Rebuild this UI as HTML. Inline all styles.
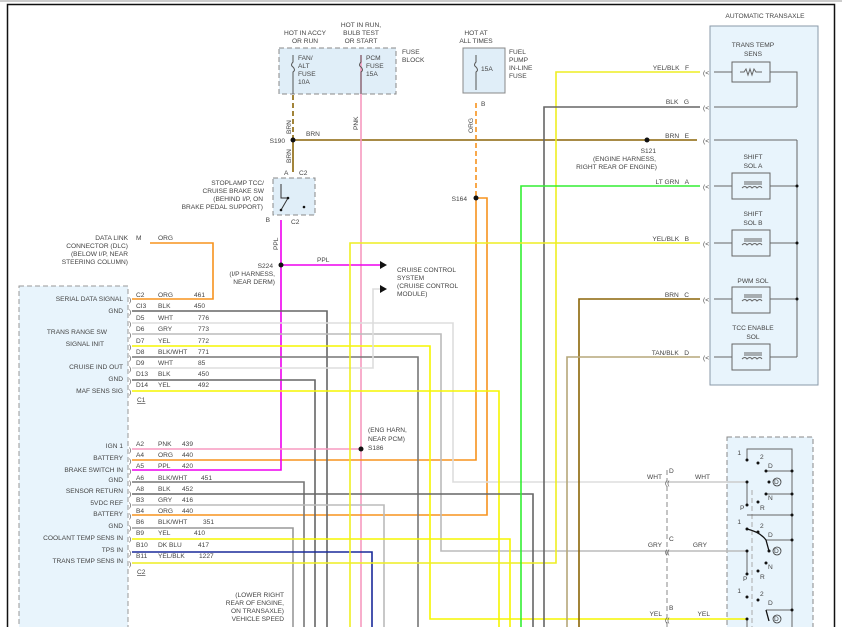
<!DOCTYPE html>
<html><head><meta charset="utf-8"><style>
html,body{margin:0;padding:0;background:#fff;width:842px;height:627px;overflow:hidden}
svg{display:block}
text{font-family:"Liberation Sans",Arial,sans-serif;font-size:6.6px;fill:#444}
</style></head><body>
<svg width="842" height="627" viewBox="0 0 842 627" xmlns="http://www.w3.org/2000/svg">
<rect x="0" y="0" width="842" height="627" fill="#fff"/>
<rect x="0" y="0" width="842" height="2" fill="#ccc"/>
<rect x="7.5" y="4.5" width="827" height="640" fill="none" stroke="#111" stroke-width="1.5"/>

<!-- boxes -->
<rect x="19" y="286" width="109" height="360" fill="#e8f4fc" stroke="#999" stroke-dasharray="5,3"/>
<rect x="279" y="48" width="117" height="46" fill="#e0eef8" stroke="#888" stroke-dasharray="5,3"/>
<rect x="463" y="48" width="42" height="45" fill="#e0eef8" stroke="#888"/>
<rect x="273" y="178" width="42" height="37" fill="#e0eef8" stroke="#888" stroke-dasharray="5,3"/>
<rect x="710" y="26" width="108" height="359" fill="#e8f4fc" stroke="#8a9aa8"/>
<rect x="727" y="437" width="86" height="200" fill="#e8f4fc" stroke="#888" stroke-dasharray="5,3"/>
<line x1="752" y1="490" x2="752" y2="627" stroke="#aaa" stroke-dasharray="5,3"/>
<line x1="667" y1="470" x2="667" y2="627" stroke="#888" stroke-dasharray="5,3"/>

<g fill="none" stroke-width="1.6">
<!-- fuse verticals -->
<line x1="293" y1="95" x2="293" y2="140" stroke="#8b6508" stroke-dasharray="5,3"/>
<line x1="293" y1="140" x2="293" y2="172" stroke="#8b6508"/>
<line x1="293" y1="140" x2="697" y2="140" stroke="#8b6508"/>
<line x1="361" y1="55" x2="361" y2="627" stroke="#f79ac0"/>
<line x1="476" y1="103" x2="476" y2="198" stroke="#f7931e" stroke-dasharray="5,3"/>
<polyline points="476,198 476,460 132,460" stroke="#f7931e"/>
<polyline points="476,198 487,198 487,515 132,515" stroke="#f7931e"/>
<!-- DLC -->
<polyline points="150,243 213,243 213,299 132,299" stroke="#f7931e"/>
<!-- PPL -->
<polyline points="281,220 281,470 132,470" stroke="#ee00ee"/>
<line x1="281" y1="265" x2="380" y2="265" stroke="#ee00ee"/>
<!-- PCM wires -->
<polyline points="132,311 327,311 327,627" stroke="#666"/>
<polyline points="132,323 453,323 453,482 700,482" stroke="#ddd"/>
<line x1="667" y1="482" x2="747" y2="482" stroke="#ccc"/>
<polyline points="132,334 441,334 441,551 747,551" stroke="#bbb"/>
<polyline points="132,346 430,346 430,619 747,619" stroke="#f5f500"/>
<polyline points="132,357 418,357 418,627" stroke="#777"/>
<polyline points="132,368 373,368 373,289 380,289" stroke="#ddd"/>
<polyline points="132,380 315,380 315,627" stroke="#666"/>
<polyline points="132,391 499,391 499,627" stroke="#f5f500"/>
<line x1="132" y1="449" x2="361" y2="449" stroke="#f79ac0"/>
<polyline points="132,482 304,482 304,627" stroke="#777"/>
<polyline points="132,494 533,494 533,627" stroke="#666"/>
<polyline points="132,505 384,505 384,627" stroke="#bbb"/>
<polyline points="132,528 293,528 293,627" stroke="#999"/>
<polyline points="132,539 510,539 510,627" stroke="#f5f500"/>
<polyline points="132,552 372,552 372,627" stroke="#1a2a9a"/>
<polyline points="132,563 556,563 556,72 700,72" stroke="#eeee22"/>
<!-- right side -->
<polyline points="700,107 544,107 544,627" stroke="#666"/>
<polyline points="700,186 521,186 521,627" stroke="#33ee33"/>
<polyline points="700,243 350,243 350,627" stroke="#eeee22"/>
<polyline points="700,299 579,299 579,627" stroke="#8b6508"/>
<polyline points="700,357 567,357 567,627" stroke="#b5a77a"/>
</g>

<!-- transaxle internals -->
<g fill="none" stroke="#666" stroke-width="1">
<line x1="714" y1="72" x2="732" y2="72"/><line x1="714" y1="107" x2="797" y2="107"/>
<line x1="714" y1="140" x2="797" y2="140"/>
<polyline points="770,72 797,72 797,107"/>
<line x1="797" y1="140" x2="797" y2="357"/>
<line x1="714" y1="186" x2="732" y2="186"/><line x1="770" y1="186" x2="797" y2="186"/>
<line x1="714" y1="243" x2="732" y2="243"/><line x1="770" y1="243" x2="797" y2="243"/>
<line x1="714" y1="299" x2="732" y2="299"/><line x1="770" y1="299" x2="797" y2="299"/>
<line x1="714" y1="357" x2="732" y2="357"/><line x1="770" y1="357" x2="797" y2="357"/>
<rect x="732" y="62" width="38" height="20" fill="#e8f4fc"/>
<rect x="732" y="173" width="38" height="26" fill="#e8f4fc"/>
<rect x="732" y="230" width="38" height="26" fill="#e8f4fc"/>
<rect x="732" y="287" width="38" height="26" fill="#e8f4fc"/>
<rect x="732" y="344" width="38" height="26" fill="#e8f4fc"/>
<path d="M740 72 l4 0 l2 -3 l2 6 l2 -6 l2 6 l2 -6 l2 3 l6 0"/>
<path d="M742 188 q3 -3 5 0 q3 -3 5 0 q3 -3 5 0 q3 -3 5 0 M744 182 h18 M744 184 h18"/>
<path d="M742 245 q3 -3 5 0 q3 -3 5 0 q3 -3 5 0 q3 -3 5 0 M744 239 h18 M744 241 h18"/>
<path d="M742 301 q3 -3 5 0 q3 -3 5 0 q3 -3 5 0 q3 -3 5 0 M744 295 h18 M744 297 h18"/>
<path d="M742 359 q3 -3 5 0 q3 -3 5 0 q3 -3 5 0 q3 -3 5 0 M744 353 h18 M744 355 h18"/>
<!-- PRNDL -->
<path d="M747 460 V449 H792 V627 M766 471 H792 M766 494 H792 M747 515 H792 M747 482 V505 M766 540 H792 M747 551 V574 M766 610 H792 M747 619 V627"/>
<path d="M747 529 Q760 532 766 540 L769 551" stroke="#111" stroke-width="1.3"/>
<path d="M766 610 L769 621" stroke="#111" stroke-width="1.3"/>
<!-- switch -->
<path d="M281 184 V198 L288 198 M281 210 L288 198" stroke="#333"/>
<!-- fuses -->
<path d="M293 55 V62 q-3 3 0 5 q3 3 0 5 V94 M361 55 V62 q-3 3 0 5 q3 3 0 5 V94 M476 55 V62 q-3 3 0 5 q3 3 0 5 V90" stroke="#555"/>
</g>
<g fill="#111">
<circle cx="797" cy="186" r="1.5"/><circle cx="797" cy="243" r="1.5"/><circle cx="797" cy="299" r="1.5"/>
<circle cx="293" cy="140" r="2.5"/><circle cx="647" cy="140" r="2.5"/><circle cx="476" cy="198" r="2.5"/>
<circle cx="281" cy="265" r="2.5"/><circle cx="361" cy="449" r="2.5"/>
<circle cx="288" cy="198" r="1.3"/><circle cx="281" cy="210" r="1.3"/><circle cx="304" cy="207" r="1.3"/>
<circle cx="747" cy="460" r="1.5"/><circle cx="758" cy="463" r="1.5"/><circle cx="766" cy="471" r="1.5"/><circle cx="769" cy="482" r="1.5"/><circle cx="766" cy="494" r="1.5"/><circle cx="747" cy="505" r="1.5"/><circle cx="758" cy="502" r="1.5"/><circle cx="747" cy="482" r="1.5"/>
<circle cx="747" cy="529" r="1.5"/><circle cx="758" cy="532" r="1.5"/><circle cx="769" cy="551" r="1.5"/><circle cx="766" cy="563" r="1.5"/><circle cx="747" cy="574" r="1.5"/><circle cx="758" cy="571" r="1.5"/><circle cx="747" cy="551" r="1.5"/>
<circle cx="747" cy="597" r="1.5"/><circle cx="758" cy="600" r="1.5"/><circle cx="747" cy="619" r="1.5"/>
<circle cx="792" cy="471" r="1.5"/><circle cx="792" cy="494" r="1.5"/><circle cx="792" cy="515" r="1.5"/><circle cx="792" cy="540" r="1.5"/><circle cx="792" cy="610" r="1.5"/>
<path d="M380 261 L387 265 L380 269Z M380 285 L387 289 L380 293Z"/>
</g>
<g fill="none" stroke="#333" stroke-width="0.8">
<circle cx="777" cy="482" r="4"/><circle cx="777" cy="551" r="4"/><circle cx="777" cy="619" r="4"/>
</g>

<!-- text -->
<g>
<text x="765" y="18" text-anchor="middle">AUTOMATIC TRANSAXLE</text>
<text x="753" y="47" text-anchor="middle">TRANS TEMP</text><text x="753" y="56" text-anchor="middle">SENS</text>
<text x="753" y="159" text-anchor="middle">SHIFT</text><text x="753" y="168" text-anchor="middle">SOL A</text>
<text x="753" y="216" text-anchor="middle">SHIFT</text><text x="753" y="225" text-anchor="middle">SOL B</text>
<text x="753" y="283" text-anchor="middle">PWM SOL</text>
<text x="753" y="330" text-anchor="middle">TCC ENABLE</text><text x="753" y="339" text-anchor="middle">SOL</text>
<g text-anchor="end">
<text x="689" y="70">YEL/BLK&#160;&#160;&#160;F</text><text x="689" y="104">BLK&#160;&#160;&#160;G</text>
<text x="689" y="138">BRN&#160;&#160;&#160;E</text><text x="689" y="184">LT GRN&#160;&#160;&#160;A</text>
<text x="689" y="241">YEL/BLK&#160;&#160;&#160;B</text><text x="689" y="297">BRN&#160;&#160;&#160;C</text>
<text x="689" y="355">TAN/BLK&#160;&#160;&#160;D</text>
</g>
<text x="656" y="153" text-anchor="end">S121</text>
<text x="656" y="161" text-anchor="end">(ENGINE HARNESS,</text>
<text x="657" y="169" text-anchor="end">RIGHT REAR OF ENGINE)</text>
<text x="305" y="35" text-anchor="middle">HOT IN ACCY</text><text x="305" y="43" text-anchor="middle">OR RUN</text>
<text x="361" y="27" text-anchor="middle">HOT IN RUN,</text><text x="361" y="35" text-anchor="middle">BULB TEST</text><text x="361" y="43" text-anchor="middle">OR START</text>
<text x="476" y="35" text-anchor="middle">HOT AT</text><text x="476" y="43" text-anchor="middle">ALL TIMES</text>
<text x="298" y="60">FAN/</text><text x="298" y="68">ALT</text><text x="298" y="76">FUSE</text><text x="298" y="84">10A</text>
<text x="366" y="60">PCM</text><text x="366" y="68">FUSE</text><text x="366" y="76">15A</text>
<text x="402" y="54">FUSE</text><text x="402" y="62">BLOCK</text>
<text x="481" y="71">15A</text>
<text x="509" y="54">FUEL</text><text x="509" y="62">PUMP</text><text x="509" y="70">IN-LINE</text><text x="509" y="78">FUSE</text>
<text x="481" y="106">B</text>
<text x="306" y="136">BRN</text>
<text x="285" y="143" text-anchor="end">S190</text>
<text x="467" y="201" text-anchor="end">S164</text>
<text x="284" y="175">A</text><text x="299" y="175">C2</text>
<text x="270" y="222" text-anchor="end">B</text><text x="291" y="224">C2</text>
<text x="264" y="185" text-anchor="end">STOPLAMP TCC/</text><text x="264" y="193" text-anchor="end">CRUISE BRAKE SW</text>
<text x="263" y="201" text-anchor="end">(BEHIND I/P, ON</text><text x="263" y="209" text-anchor="end">BRAKE PEDAL SUPPORT)</text>
<text x="273" y="268" text-anchor="end">S224</text>
<text x="275" y="276" text-anchor="end">(I/P HARNESS,</text><text x="275" y="284" text-anchor="end">NEAR DERM)</text>
<text x="317" y="262">PPL</text>
<text x="397" y="272">CRUISE CONTROL</text><text x="397" y="280">SYSTEM</text><text x="397" y="288">(CRUISE CONTROL</text><text x="397" y="296">MODULE)</text>
<text x="128" y="240" text-anchor="end">DATA LINK</text><text x="128" y="248" text-anchor="end">CONNECTOR (DLC)</text><text x="128" y="256" text-anchor="end">(BELOW I/P, NEAR</text><text x="128" y="264" text-anchor="end">STEERING COLUMN)</text>
<text x="136" y="240">M</text><text x="158" y="240">ORG</text>
<text x="368" y="432">(ENG HARN,</text><text x="368" y="441">NEAR PCM)</text><text x="368" y="450">S186</text>
<g text-anchor="end">
<text x="284" y="597">(LOWER RIGHT</text><text x="284" y="605">REAR OF ENGINE,</text><text x="284" y="613">ON TRANSAXLE)</text><text x="284" y="621">VEHICLE SPEED</text>
<text x="123" y="301">SERIAL DATA SIGNAL</text><text x="123" y="313">GND</text>
<text x="107" y="334">TRANS RANGE SW</text><text x="104" y="346">SIGNAL INIT</text>
<text x="123" y="369">CRUISE IND OUT</text><text x="123" y="381">GND</text><text x="123" y="393">MAF SENS SIG</text>
<text x="123" y="448">IGN 1</text><text x="123" y="460">BATTERY</text><text x="123" y="472">BRAKE SWITCH IN</text>
<text x="123" y="482">GND</text><text x="123" y="493">SENSOR RETURN</text><text x="123" y="505">5VDC REF</text>
<text x="123" y="516">BATTERY</text><text x="123" y="528">GND</text><text x="123" y="540">COOLANT TEMP SENS IN</text>
<text x="123" y="552">TPS IN</text><text x="123" y="563">TRANS TEMP SENS IN</text>
<text x="662" y="479">WHT</text><text x="710" y="479">WHT</text>
<text x="662" y="547">GRY</text><text x="707" y="547">GRY</text>
<text x="662" y="616">YEL</text><text x="710" y="616">YEL</text>
<text x="741" y="455">1</text><text x="741" y="524">1</text><text x="741" y="593">1</text>
</g>
<text x="669" y="473">D</text><text x="669" y="541">C</text><text x="669" y="610">B</text>
<text x="760" y="459">2</text><text x="768" y="468">D</text><text x="768" y="500">N</text><text x="760" y="510">R</text><text x="740" y="510">P</text><text x="774" y="484" font-size="5.5">D</text>
<text x="760" y="528">2</text><text x="768" y="537">D</text><text x="768" y="569">N</text><text x="760" y="579">R</text><text x="743" y="581">P</text><text x="774" y="553" font-size="5.5">D</text>
<text x="760" y="596">2</text><text x="768" y="605">D</text><text x="774" y="621" font-size="5.5">D</text>
<g transform="rotate(-90)">
<text x="-134" y="291">BRN</text><text x="-163" y="291">BRN</text><text x="-130" y="358">PNK</text><text x="-133" y="473">ORG</text><text x="-250" y="278">PPL</text>
</g>
<!-- PCM wire labels -->
<text x="136" y="297">C2</text><text x="158" y="297">ORG</text><text x="194" y="297">461</text>
<text x="136" y="308">CI3</text><text x="158" y="308">BLK</text><text x="194" y="308">450</text>
<text x="136" y="320">D5</text><text x="158" y="320">WHT</text><text x="198" y="320">776</text>
<text x="136" y="331">D6</text><text x="158" y="331">GRY</text><text x="198" y="331">773</text>
<text x="136" y="343">D7</text><text x="158" y="343">YEL</text><text x="198" y="343">772</text>
<text x="136" y="354">D8</text><text x="158" y="354">BLK/WHT</text><text x="198" y="354">771</text>
<text x="136" y="365">D9</text><text x="158" y="365">WHT</text><text x="198" y="365">85</text>
<text x="136" y="376">D13</text><text x="158" y="376">BLK</text><text x="198" y="376">450</text>
<text x="136" y="387">D14</text><text x="158" y="387">YEL</text><text x="198" y="387">492</text>
<text x="137" y="402" text-decoration="underline">C1</text>
<text x="136" y="446">A2</text><text x="158" y="446">PNK</text><text x="182" y="446">439</text>
<text x="136" y="457">A4</text><text x="158" y="457">ORG</text><text x="182" y="457">440</text>
<text x="136" y="468">A5</text><text x="158" y="468">PPL</text><text x="182" y="468">420</text>
<text x="136" y="480">A6</text><text x="158" y="480">BLK/WHT</text><text x="201" y="480">451</text>
<text x="136" y="491">A8</text><text x="158" y="491">BLK</text><text x="182" y="491">452</text>
<text x="136" y="502">B3</text><text x="158" y="502">GRY</text><text x="182" y="502">416</text>
<text x="136" y="513">B4</text><text x="158" y="513">ORG</text><text x="182" y="513">440</text>
<text x="136" y="524">B6</text><text x="158" y="524">BLK/WHT</text><text x="203" y="524">351</text>
<text x="136" y="535">B9</text><text x="158" y="535">YEL</text><text x="194" y="535">410</text>
<text x="136" y="547">B10</text><text x="158" y="547">DK BLU</text><text x="198" y="547">417</text>
<text x="136" y="558">B11</text><text x="158" y="558">YEL/BLK</text><text x="199" y="558">1227</text>
<text x="137" y="574" text-decoration="underline">C2</text>
</g>
<!-- connector glyphs -->
<g fill="#555" font-size="8">
<text x="129" y="302">)</text><text x="129" y="314">)</text><text x="129" y="326">)</text><text x="129" y="337">)</text><text x="129" y="349">)</text><text x="129" y="360">)</text><text x="129" y="371">)</text><text x="129" y="383">)</text><text x="129" y="394">)</text>
<text x="129" y="452">)</text><text x="129" y="463">)</text><text x="129" y="473">)</text><text x="129" y="485">)</text><text x="129" y="496">)</text><text x="129" y="507">)</text><text x="129" y="518">)</text><text x="129" y="530">)</text><text x="129" y="541">)</text><text x="129" y="555">)</text><text x="129" y="566">)</text>
<text x="703" y="75">(&lt;</text><text x="703" y="110">(&lt;</text><text x="703" y="143">(&lt;</text><text x="703" y="189">(&lt;</text><text x="703" y="246">(&lt;</text><text x="703" y="302">(&lt;</text><text x="703" y="360">(&lt;</text>
<text x="665" y="485">((</text><text x="665" y="554">((</text><text x="665" y="622">((</text>
</g>
</svg>
</body></html>
